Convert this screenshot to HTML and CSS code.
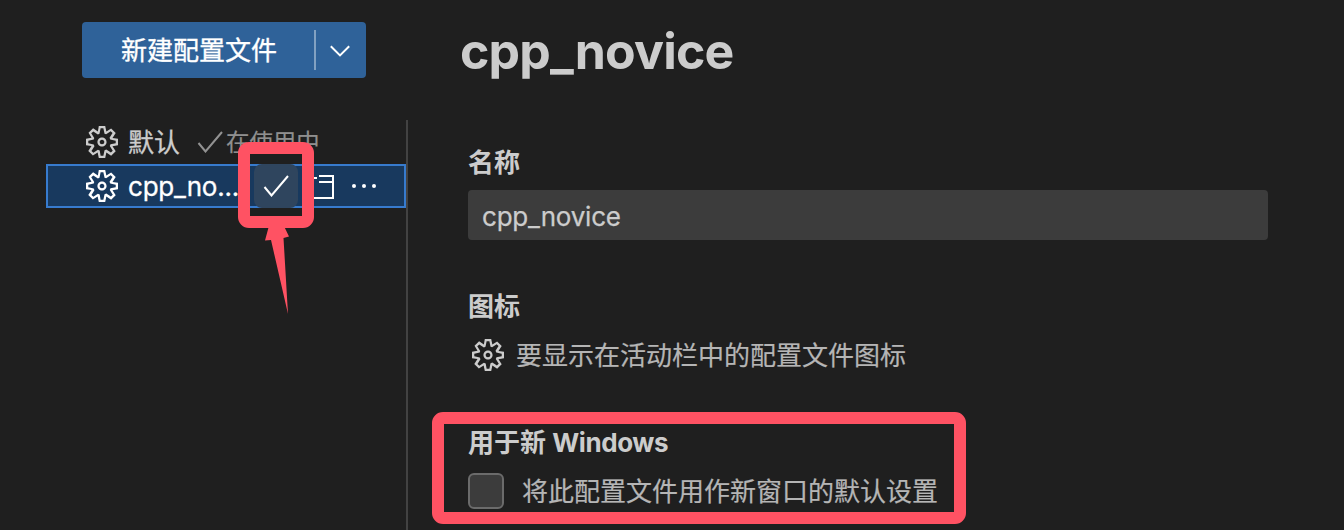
FILE: index.html
```html
<!DOCTYPE html>
<html lang="zh-CN">
<head>
<meta charset="utf-8">
<title>配置文件</title>
<link rel="stylesheet" href="styles.css">
</head>
<body>
<svg class="defs" width="0" height="0">
  <symbol id="gear" viewBox="1 1 14 14"><path fill="currentColor" fill-rule="evenodd" d="M9.1 4.4L8.6 2H7.4l-.5 2.4-.7.3-2-1.3-.9.8 1.3 2-.2.7-2.4.5v1.2l2.4.5.3.8-1.3 2 .8.8 2-1.3.8.3.4 2.3h1.2l.5-2.4.8-.3 2 1.3.8-.8-1.3-2 .3-.8 2.3-.4V7.4l-2.4-.5-.3-.8 1.3-2-.8-.8-2 1.3-.7-.2zM9.4 1l.5 2.4L12 2.1l2 2-1.4 2.1 2.4.4v2.8l-2.4.5L14 12l-2 2-2.1-1.4-.5 2.4H6.6l-.5-2.4L4 13.9l-2-2 1.4-2.1L1 9.4V6.6l2.4-.5L2.1 4l2-2 2.1 1.4.4-2.4h2.8zm.6 7c0 1.1-.9 2-2 2s-2-.9-2-2 .9-2 2-2 2 .9 2 2zM8 9c.6 0 1-.4 1-1s-.4-1-1-1-1 .4-1 1 .4 1 1 1z"/></symbol>
  <symbol id="check" viewBox="0 0 26 22"><path fill="none" stroke="currentColor" stroke-width="2" d="M1.5 12L8.5 20.5L25 1"/></symbol>
</svg>
<div class="app">
  <aside class="sidebar">
    <div class="new-profile">
      <span class="new-label">新建配置文件</span>
      <span class="separator"></span>
      <svg class="chevron" viewBox="0 0 20 12"><path d="M.8 1.2L10 10.4L19.2 1.2"/></svg>
    </div>
    <div class="list">
      <div class="row">
        <svg class="gear"><use href="#gear"/></svg>
        <span class="name">默认</span>
        <svg class="check"><use href="#check"/></svg>
        <span class="status">在使用中</span>
      </div>
      <div class="row selected">
        <svg class="gear"><use href="#gear"/></svg>
        <span class="name">cpp_no...</span>
        <span class="action"><svg class="check"><use href="#check"/></svg></span>
        <svg class="window" viewBox="0 0 26 28"><path d="M25 3V25H1V5H9M11 3H26M11 9H25"/></svg>
        <svg class="more" viewBox="0 0 26 6"><circle cx="3" cy="3" r="2"/><circle cx="13" cy="3" r="2"/><circle cx="23" cy="3" r="2"/></svg>
      </div>
    </div>
  </aside>
  <main class="details">
    <h1>cpp_novice</h1>
    <h2 class="name-title">名称</h2>
    <div class="input">cpp_novice</div>
    <h2 class="icon-title">图标</h2>
    <div class="icon-line"><svg class="gear"><use href="#gear"/></svg><span class="description">要显示在活动栏中的配置文件图标</span></div>
    <h2 class="window-title">用于新 <span class="latin">Windows</span></h2>
    <div class="check-line"><span class="checkbox"></span><span class="description">将此配置文件用作新窗口的默认设置</span></div>
  </main>
</div>
<div class="mark mark-action"></div>
<div class="mark mark-window"></div>
<svg class="arrow" viewBox="0 0 26 90"><path d="M5 0H17L24 14.5L18.5 16L23 92L6 18L0 18.5Z"/></svg>
</body>
</html>
```
FILE: styles.css
```css
* { box-sizing: border-box; }
body {
  margin: 0;
  height: 530px;
  overflow: hidden;
  background: #1f1f1f;
  color: #cccccc;
  font: 26px/44px Inter, "Noto Sans CJK SC", sans-serif;
  white-space: nowrap;
}
svg { display: block; flex: none; }
.defs { position: absolute; }
.app { display: flex; height: 530px; }
.sidebar { width: 408px; flex: none; padding-top: 22px; }
.new-profile {
  display: flex;
  align-items: center;
  width: 284px;
  height: 56px;
  margin-left: 82px;
  padding-left: 39px;
  border-radius: 4px;
  background: #2f6299;
  color: #fff;
}
.new-label { width: 193px; padding-top: 2px; -webkit-text-stroke: .35px; }
.separator { width: 2px; height: 40px; background: #82a1c2; }
.chevron { width: 20px; height: 12px; margin: 2px 0 0 14px; fill: none; stroke: #fff; stroke-width: 2; }
.list { height: 410px; margin-top: 42px; border-right: 2px solid #424242; }
.row { display: flex; align-items: center; height: 44px; margin-left: 46px; padding-left: 40px; }
.gear { width: 32px; height: 32px; }
.name { margin-left: 10px; padding-top: 2px; -webkit-text-stroke: .3px; }
.row .check { width: 26px; height: 22px; margin-left: 17px; }
.row > .check { color: #929292; }
.status { margin-left: 3px; padding-top: 2px; font-size: 23.4px; color: #8f8f8f; -webkit-text-stroke: .2px; }
.selected { padding-left: 38px; border: 2px solid #377bce; background: #18395e; color: #fff; }
.selected .name { width: 110px; letter-spacing: -.2px; }
.action { display: flex; width: 44px; height: 44px; margin-left: 16px; align-items: center; justify-content: center; border-radius: 8px; background: #2f455e; }
.selected .action .check { margin: 0; }
.window { width: 26px; height: 28px; margin: 2px 0 0 10px; fill: none; stroke: #fff; stroke-width: 2; }
.more { width: 26px; height: 6px; margin-left: 17px; fill: #fff; }
.details { padding-left: 60px; }
h1 { margin: 19px 0 0 -8px; font-size: 50px; line-height: 64px; font-weight: 700; letter-spacing: -.8px; }
h2 { margin: 0; font-size: 26px; line-height: 44px; font-weight: 700; }
.name-title { margin-top: 58px; }
.input { width: 800px; height: 50px; margin-top: 5px; padding-left: 14px; border-radius: 4px; background: #3c3c3c; line-height: 53px; letter-spacing: -.2px; -webkit-text-stroke: .25px; }
.icon-title { margin-top: 45px; }
.icon-line { display: flex; align-items: center; height: 44px; margin-top: 4px; padding-left: 4px; gap: 12px; color: #b5b5b5; }
.description { padding-top: 1px; -webkit-text-stroke: .2px; }
.icon-line .gear { color: #ccc; }
.window-title { margin-top: 44px; }
.latin { letter-spacing: -.4px; }
.check-line { display: flex; align-items: center; height: 44px; margin-top: 4px; gap: 18px; color: #b5b5b5; }
.checkbox { width: 36px; height: 36px; border: 2px solid #6b6b6b; border-radius: 6px; background: #3c3c3c; }
.mark { position: absolute; border: 12px solid #ff5263; border-radius: 11px; }
.mark-action { left: 238px; top: 142px; width: 76px; height: 86px; }
.mark-window { left: 432px; top: 412px; width: 534px; height: 112px; }
.arrow { position: absolute; left: 265px; top: 222px; width: 26px; height: 90px; overflow: visible; fill: #ff5263; }
```
